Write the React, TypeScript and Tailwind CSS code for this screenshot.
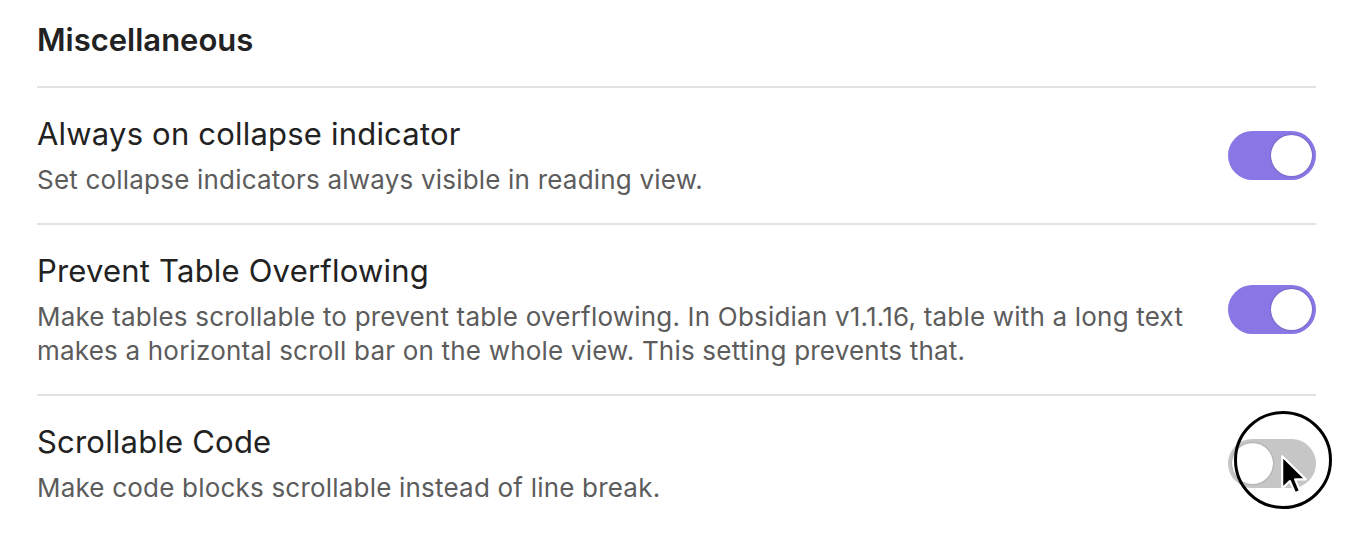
import React from "react";

const SETTINGS = [
  {
    name: "Always on collapse indicator",
    desc: ["Set collapse indicators always visible in reading view."],
    on: true,
  },
  {
    name: "Prevent Table Overflowing",
    desc: [
      "Make tables scrollable to prevent table overflowing. In Obsidian v1.1.16, table with a long text",
      "makes a horizontal scroll bar on the whole view. This setting prevents that.",
    ],
    on: true,
  },
  {
    name: "Scrollable Code",
    desc: ["Make code blocks scrollable instead of line break."],
    on: false,
    hovered: true,
  },
];

function Toggle({ on }: { on: boolean }) {
  return (
    <div
      className={`w-[88px] h-[49px] rounded-full p-[4px] flex items-center ${
        on ? "bg-[#8a76e4] justify-end" : "bg-[#c6c6c6] justify-start"
      }`}
    >
      <div className="w-[41px] h-[41px] rounded-full bg-white shadow-[0_0_2px_rgba(0,0,0,0.35)]" />
    </div>
  );
}

// the click highlight ring and pointer over the last toggle
function Cursor() {
  return (
    <>
      <div className="absolute left-[6px] top-[-28px] w-[98px] h-[98px] rounded-full border-[3px] border-black" />
      <svg
        className="absolute left-[52px] top-[15px]"
        width="28"
        height="43"
        viewBox="0 0 13 20"
      >
        <path
          d="M1 1 L1 16 L4.6 12.6 L7 18.2 L9.3 17.2 L7 11.8 L12 11.8 Z"
          fill="#000"
          stroke="#fff"
          strokeWidth="1"
          strokeLinejoin="round"
        />
      </svg>
    </>
  );
}

export default function App() {
  return (
    <div className="min-h-screen bg-white pl-[37px] pr-[42px] pt-[18px] font-['Inter',sans-serif] overflow-hidden">
      <h2 className="text-[31px] leading-[44px] font-semibold text-[#222] pb-[24px]">Miscellaneous</h2>
      {SETTINGS.map((s) => (
        <div
          key={s.name}
          className="border-t-2 border-[#e2e2e2] flex items-center justify-between pt-[26px] pb-[26px]"
        >
          <div className="flex flex-col">
            <div className="text-[31px] leading-[40px] tracking-[0.2px] text-[#222] mb-[9px]">{s.name}</div>
            {s.desc.map((line) => (
              <div key={line} className="text-[26px] leading-[34px] tracking-[0.2px] text-[#5c5c5c]">
                {line}
              </div>
            ))}
          </div>
          <div className="relative">
            <Toggle on={s.on} />
            {s.hovered && <Cursor />}
          </div>
        </div>
      ))}
    </div>
  );
}
